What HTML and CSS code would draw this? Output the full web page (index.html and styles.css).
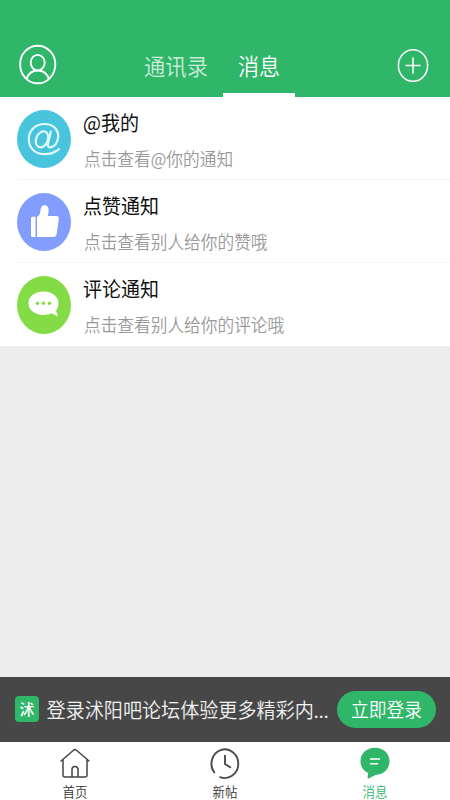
FILE: index.html
```html
<!DOCTYPE html>
<html lang="zh-CN">
<head>
<meta charset="utf-8">
<title>消息</title>
<link rel="stylesheet" href="styles.css">
</head>
<body>
<div class="app">
  <header class="header">
    <svg class="profile" width="38" height="41" viewBox="0 0 38 41" fill="none" stroke="#fff" stroke-width="1.9">
      <ellipse cx="18.700" cy="20.5" rx="17.6" ry="18.8"/>
      <ellipse cx="18.700" cy="18.700" rx="7" ry="7.8"/>
      <path d="M7.500 35C9.500 29.300 13.500 26.500 18.700 26.500s9.200 2.800 11.200 8.500"/>
    </svg>
    <nav class="tabs">
      <a class="tab"><span class="tall">通讯录</span></a>
      <a class="tab tab-active"><span class="tall">消息</span></a>
    </nav>
    <svg class="add" width="32" height="35" viewBox="0 0 32 35" fill="none" stroke="#fff" stroke-width="1.5">
      <ellipse cx="16" cy="17.5" rx="14.6" ry="15.8"/>
      <path d="M8.5 17.5h15M16 9.3v16.4"/>
    </svg>
  </header>
  <main class="list">
    <section class="row">
      <div class="avatar cyan">
        <svg width="54" height="58" viewBox="0 0 54 58" fill="none" stroke="#e2fbff" stroke-width="2.200" stroke-linecap="round">
          <ellipse cx="25" cy="29.300" rx="5.800" ry="8.300" transform="rotate(22 25 29.300)"/>
          <path d="M33.800 21.500L31 33.500c-.6 3 1 4.300 3.200 3.800 4-1 7-5.500 7-11.200C41.200 19 35.500 14 27.500 14 18.500 14 11.800 20.300 11.800 29c0 9 6.200 15.200 16 15.200 5.500 0 10.200-1.500 14.200-5"/>
        </svg>
      </div>
      <div class="copy"><h2 class="tall">@我的</h2><p class="tall">点击查看@你的通知</p></div>
    </section>
    <section class="row">
      <div class="avatar blue">
        <svg width="54" height="58" viewBox="0 0 54 58" fill="#fff">
          <path d="M18.500 23.800v20.200H15.500q-1.500 0-1.500-1.500V25.500q0-1.700 1.500-1.700z"/>
          <path d="M20 23.800c2-.8 3-2.500 3.300-5.300.3-3.800 1.400-6.300 4.200-6.300 3 0 4.300 2.300 4.100 5.500-.1 2-.3 3.700-.8 5.300H39.500c1.800 0 2.500 1.200 2.300 3L39.700 41c-.3 2-1.200 3-3 3H20z"/>
        </svg>
      </div>
      <div class="copy"><h2 class="tall">点赞通知</h2><p class="tall">点击查看别人给你的赞哦</p></div>
    </section>
    <section class="row">
      <div class="avatar lime">
        <svg width="54" height="58" viewBox="0 0 54 58" fill="#fff">
          <path d="M26.500 15.500c8.500 0 15 4.800 15 11.700 0 3.200-1.200 5.600-2.500 7.300L41 40.500l-6.500-3.300c-2.500 1.200-5 1.700-8 1.700-8.500 0-15-4.800-15-11.700s6.500-11.700 15-11.700z"/>
          <g fill="#83dc45"><circle cx="20.500" cy="27.300" r="1.700"/><circle cx="26.500" cy="27.300" r="1.700"/><circle cx="32.500" cy="27.300" r="1.700"/></g>
        </svg>
      </div>
      <div class="copy"><h2 class="tall">评论通知</h2><p class="tall">点击查看别人给你的评论哦</p></div>
    </section>
  </main>
  <aside class="login">
    <div class="logo">沭</div>
    <p class="promo tall">登录沭阳吧论坛体验更多精彩内<span class="dots">...</span></p>
    <button class="login-button"><span class="tall">立即登录</span></button>
  </aside>
  <footer class="bottom">
    <a class="item">
      <svg width="32" height="34" viewBox="0 0 32 34" fill="none" stroke="#444" stroke-width="1.500" stroke-linecap="round" stroke-linejoin="round">
        <path d="M2 15L14.500 4.300Q16 3 17.500 4.300L30 15M4 13.500v15.500q0 2 2 2h20q2 0 2-2V13.500M13 30.500v-7q0-3 3-3t3 3v7"/>
      </svg>
      <span class="tall">首页</span>
    </a>
    <a class="item">
      <svg width="32" height="34" viewBox="0 0 32 34" fill="none" stroke="#4a4a4a" stroke-width="1.900">
        <path d="M5.700 27A13.400 14.300 0 1 1 10.500 30.800"/>
        <path d="M16 9v9l6 3.700"/>
      </svg>
      <span class="tall">新帖</span>
    </a>
    <a class="item item-active">
      <svg width="32" height="34" viewBox="0 0 32 34">
        <path fill="#2fb669" d="M16 1.800c8.300 0 14.500 5.600 14.500 13.500 0 7.600-5.700 13.200-13.500 13.500L9.500 32.600c-.6.300-1 0-.9-.7l.5-5C4.300 24.500 1.500 20.500 1.500 15.300 1.500 7.400 7.700 1.800 16 1.800z"/>
        <path stroke="#fff" stroke-width="1.400" d="M11 13h10M11 17.800h8"/>
      </svg>
      <span class="tall">消息</span>
    </a>
  </footer>
</div>
</body>
</html>
```
FILE: styles.css
```css
* { box-sizing: border-box; }
body { margin: 0; font-family: "Noto Sans CJK SC", sans-serif; }
h2, p { margin: 0; font-weight: 400; white-space: nowrap; }
svg { display: block; flex: none; }
.tall { transform: scaleY(1.07); }
span.tall { display: inline-block; }
.app { width: 450px; height: 800px; display: flex; flex-direction: column; background: #ededed; overflow: hidden; }
.header { height: 97px; flex: none; display: flex; padding: 32px 21px 0 19px; background: #2fb669; }
.profile { margin-top: 12px; }
.add { margin: 15.500px 0 0 auto; }
.tabs { display: flex; margin-left: 72px; }
.tab { width: 94px; font-size: 21.300px; font-weight: 350; line-height: 30px; padding-top: 17.500px; text-align: center; color: rgba(255, 255, 255, .75); }
.tab-active { width: 72px; font-size: 21px; color: #fff; border-bottom: 4px solid #fff; }
.list { flex: none; background: #fff; }
.row { height: 83px; display: flex; padding-left: 17px; background: linear-gradient(#f5f5f5, #f5f5f5) 17px 100% / 100% 1px no-repeat; }
.row:last-child { background: none; }
.avatar { width: 54px; height: 58px; margin-top: 12.500px; border-radius: 50%; flex: none; }
.cyan { background: #48c4dc; }
.blue { background: #839dff; }
.lime { background: #83dc45; }
.copy { padding: 11px 0 0 12px; }
.copy h2 { font-size: 19px; line-height: 28px; color: #111; }
.copy p { margin: 11px 0 0 1px; font-size: 16.700px; line-height: 24px; font-weight: 350; color: #999; }
.login { margin-top: auto; height: 65px; flex: none; display: flex; align-items: center; padding: 0 14px 0 15px; background: #474747; color: #fff; }
.logo { width: 24px; height: 26px; margin-bottom: 1px; border-radius: 4px; background: #2fb669; font-size: 15px; font-weight: 500; line-height: 25px; text-align: center; }
.promo { margin: 2px 0 0 7.500px; width: 283px; font-size: 19.100px; line-height: 28px; font-weight: 350; color: #f2f2f2; }
.dots { font-family: Roboto, sans-serif; font-size: 18px; font-weight: 500; }
.login-button { width: 99px; height: 37px; margin-left: auto; padding: 0 0 3px; border: 0; border-radius: 19px; background: #2fb669; color: #fff; font: 350 17.800px/26px "Noto Sans CJK SC", sans-serif; }
.bottom { height: 58px; flex: none; display: flex; background: #fff; }
.item { flex: 1; display: flex; flex-direction: column; align-items: center; padding-top: 4px; font-size: 12.500px; font-weight: 350; line-height: 18px; color: #333; }
.item .tall { margin-top: 2.500px; }
.item-active { color: #2fb669; }
```
